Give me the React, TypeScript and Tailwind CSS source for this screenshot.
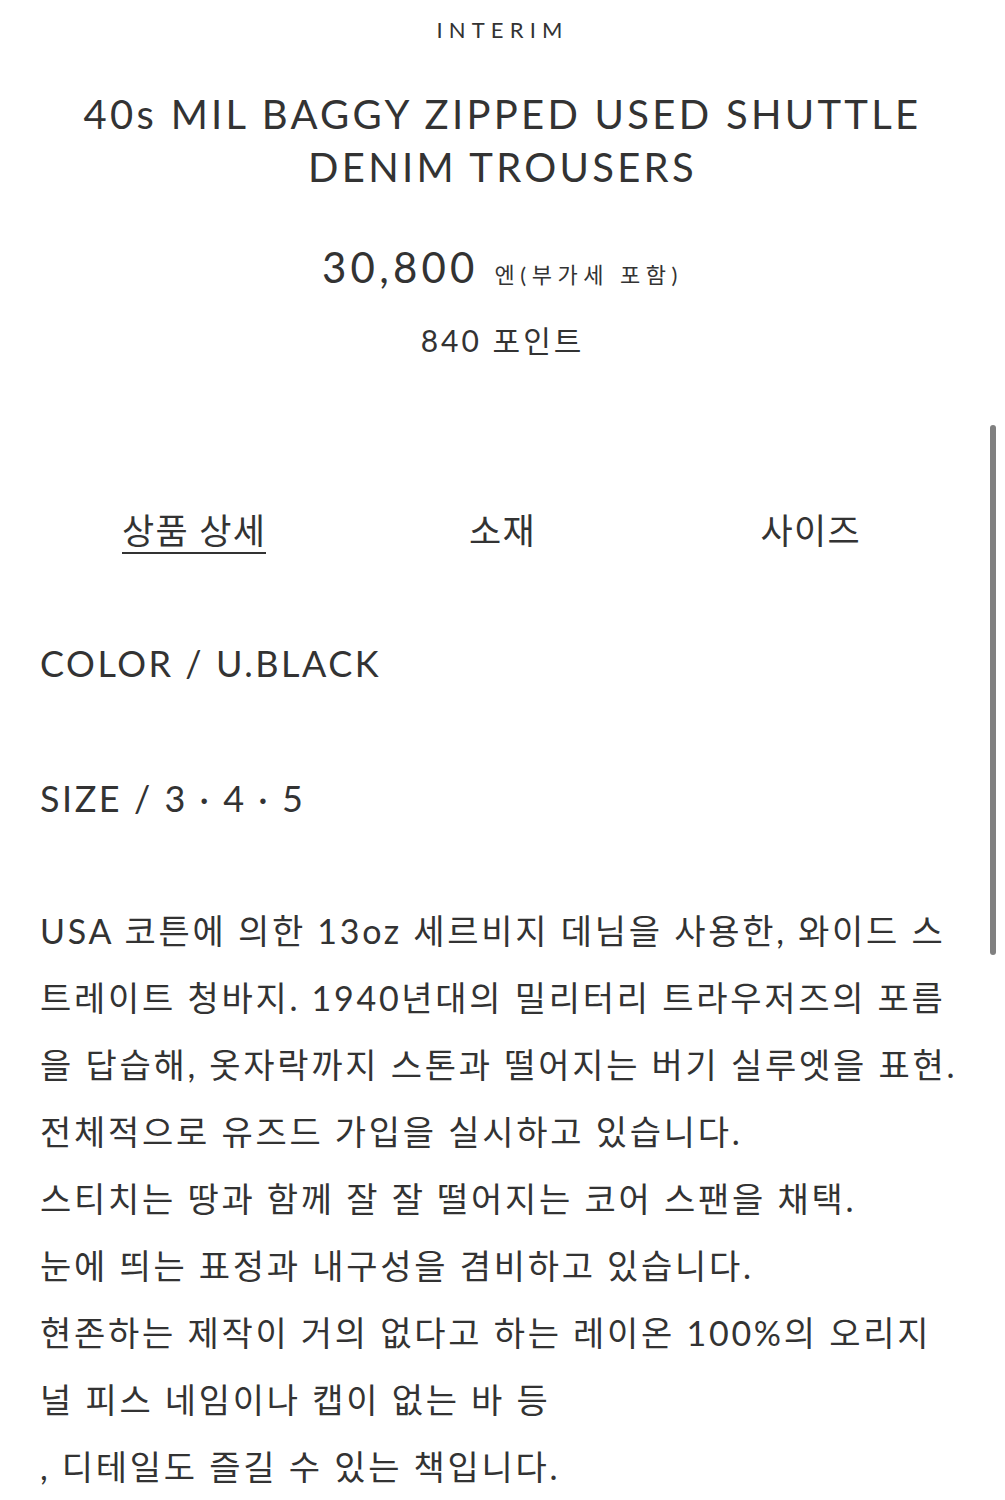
import React from 'react';

const font = { fontFamily: "Lato, 'Noto Sans CJK KR', sans-serif" };

const tabs = ['상품 상세', '소재', '사이즈'];

export default function App() {
    return (
        <div className="relative min-h-[1500px] bg-white text-[#333] tracking-[0.08em]" style={font}>
            <div className="px-10">
                <div className="pt-[15px] text-center text-[22px] leading-[30px] tracking-[0.28em]">INTERIM</div>

                <h1 className="mt-[43px] text-center text-[40px] leading-[53px] font-normal tracking-[0.082em]">
                    40s MIL BAGGY ZIPPED USED SHUTTLE
                    <br />
                    DENIM TROUSERS
                </h1>

                <div className="mt-[48px] flex items-baseline justify-center gap-4">
                    <span className="text-[42px] leading-[50px] tracking-[0.1em]">30,800</span>
                    <span className="text-[22px] tracking-[0.25em]">엔(부가세 포함)</span>
                </div>

                <div className="mt-[28px] text-center text-[30px] leading-[40px] tracking-[0.1em]">840 포인트</div>

                <div className="mt-[148px] grid grid-cols-3 text-center text-[35px] leading-[44px]">
                    {tabs.map((t, i) => (
                        <div key={t}>
                            <span className={i === 0 ? 'border-b-2 border-[#333] pb-[1px]' : ''}>{t}</span>
                        </div>
                    ))}
                </div>

                <div className="mt-[86px] text-[36px] leading-[50px] tracking-[0.07em]">COLOR / U.BLACK</div>
                <div className="mt-[85px] text-[36px] leading-[50px] tracking-[0.07em]">SIZE / 3 · 4 · 5</div>

                <p className="mt-[74px] mr-[5px] text-[34px] leading-[67px] tracking-[0.08em]">
                    USA 코튼에 의한 13oz 세르비지 데님을 사용한, 와이드 스트레이트 청바지. 1940년대의 밀리터리 트라우저즈의 포름을 답습해, 옷자락까지 스톤과 떨어지는 버기 실루엣을 표현.
                    <br />
                    전체적으로 유즈드 가입을 실시하고 있습니다.
                    <br />
                    스티치는 땅과 함께 잘 잘 떨어지는 코어 스팬을 채택.
                    <br />
                    눈에 띄는 표정과 내구성을 겸비하고 있습니다.
                    <br />
                    현존하는 제작이 거의 없다고 하는 레이온 100%의 오리지널 피스 네임이나 캡이 없는 바 등
                    <br />
                    , 디테일도 즐길 수 있는 책입니다.
                </p>
            </div>

            <div className="absolute right-[9px] top-[425px] h-[530px] w-[6px] rounded-full bg-[#808080]" />
        </div>
    );
}
